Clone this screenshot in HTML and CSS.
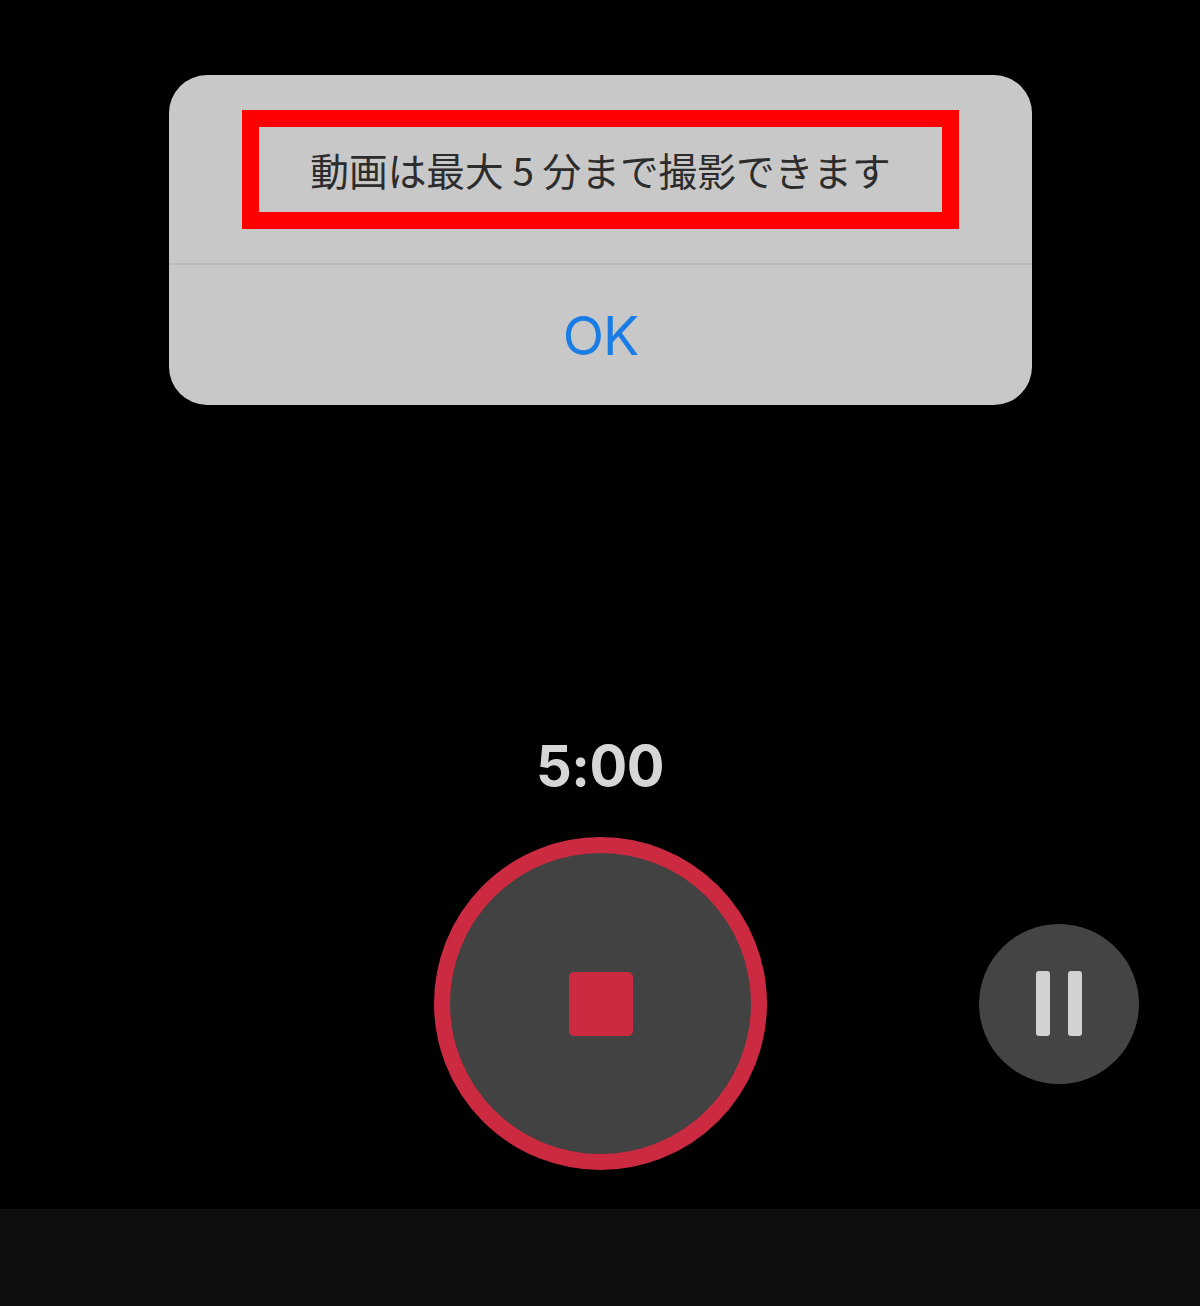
FILE: index.html
```html
<!DOCTYPE html>
<html lang="ja">
<head>
<meta charset="utf-8">
<title>動画撮影</title>
<link rel="stylesheet" href="styles.css">
</head>
<body>
<main class="stage">
  <section class="dialog">
    <div class="dialog-body">
      <div class="highlight">
        <p class="message">動画は最大 5 分まで撮影できます</p>
      </div>
    </div>
    <div class="dialog-action">OK</div>
  </section>
  <div class="recorder">
    <div class="timer">5:00</div>
    <div class="controls">
      <div class="record"><span class="stop"></span></div>
      <div class="pause"><span class="bar"></span><span class="bar"></span></div>
    </div>
  </div>
</main>
<footer class="bottom"></footer>
</body>
</html>
```
FILE: styles.css
```css
* { box-sizing: border-box; }
html, body { margin: 0; height: 1306px; background: #000; }
body { display: flex; flex-direction: column; overflow: hidden; }
.stage { flex: 1; display: flex; flex-direction: column; padding-top: 75px; }
.dialog {
  width: 863px;
  height: 330px;
  margin-left: 169px;
  background: #c8c8c8;
  border-radius: 38px;
  display: flex;
  flex-direction: column;
}
.dialog-body {
  height: 190px;
  flex: none;
  padding: 35px 73px 0;
  border-bottom: 2px solid #b9b9b9;
}
.highlight {
  width: 717px;
  height: 119px;
  border: 17px solid #fe0000;
  display: flex;
  align-items: center;
  justify-content: center;
}
.message {
  margin: 0;
  font-family: "Noto Sans CJK JP", sans-serif;
  font-size: 38.7px;
  font-weight: 400;
  line-height: 1;
  color: #2c2c2c;
  white-space: nowrap;
}
.dialog-action {
  flex: 1;
  display: flex;
  align-items: center;
  justify-content: center;
  font-family: "Inter", sans-serif;
  font-size: 54px;
  font-weight: 400;
  letter-spacing: -1px;
  color: #1a7de6;
}
.recorder { margin-top: 327px; display: flex; flex-direction: column; align-items: center; }
.timer {
  font-family: "Inter", sans-serif;
  font-size: 56px;
  font-weight: 700;
  letter-spacing: -0.5px;
  line-height: 68px;
  color: #d6d6d6;
}
.controls {
  margin-top: 37px;
  width: 100%;
  display: grid;
  grid-template-columns: 434px 333px 1fr;
  align-items: center;
}
.record {
  grid-column: 2;
  width: 333px;
  height: 333px;
  border-radius: 50%;
  border: 16px solid #cb2a40;
  background: #424242;
  display: flex;
  align-items: center;
  justify-content: center;
}
.stop { width: 64px; height: 64px; border-radius: 5px; background: #cb2a40; }
.pause {
  grid-column: 3;
  margin-left: 212px;
  width: 160px;
  height: 160px;
  border-radius: 50%;
  background: #444444;
  display: flex;
  align-items: center;
  justify-content: center;
  gap: 18px;
}
.bar { width: 14px; height: 65px; border-radius: 3px; background: #d2d2d2; }
.bottom { height: 97px; flex: none; background: #0e0e0e; }
```
